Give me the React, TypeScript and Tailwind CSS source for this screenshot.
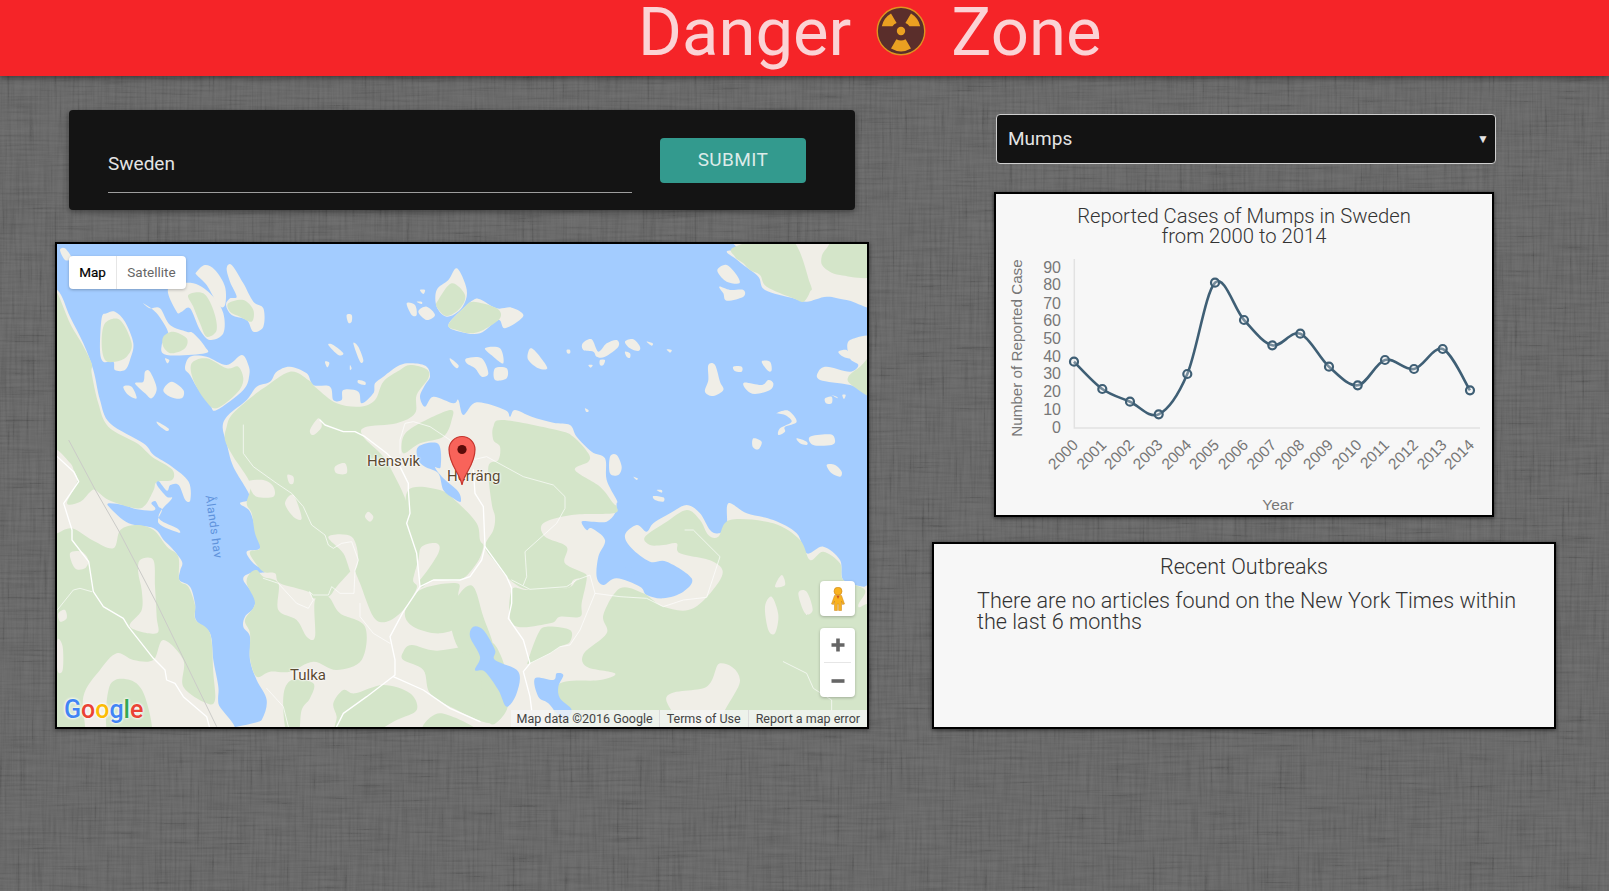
const COUNTRY = "Sweden";
const DISEASE = "Mumps";

// map shapes, in a 3x space: x = (pageX - 50) * 3, y = (pageY - 240) * 3
const land = [
  "-40,140 22,150 60,230 100,310 130,390 150,480 180,550 280,610 311,645 366,680 416,725 421,780 406,780 386,735 361,735 351,752 325,722 321,735 350,770 366,775 331,815 331,840 381,865 386,878 326,850 336,810 326,800 316,783 304,790 316,805 306,812 261,808 221,795 176,790 181,805 236,850 311,865 341,900 366,925 396,965 391,990 388,1020 420,1040 435,1090 438,1140 480,1180 490,1260 505,1340 505,1390 520,1500 -40,1500",
  "590,1500 635,1440 650,1380 620,1320 600,1260 600,1190 580,1160 585,1130 610,1105 615,1070 580,1020 600,1000 645,995 610,970 590,935 630,925 620,880 600,815 570,790 600,770 550,680 530,610 518,560 535,525 590,480 620,440 660,425 680,395 720,380 770,400 790,435 840,440 850,480 875,480 880,450 925,455 935,490 970,460 975,430 1000,410 1050,375 1090,370 1130,380 1140,410 1125,435 1110,470 1125,500 1150,470 1210,490 1225,480 1240,525 1280,487 1365,510 1380,530 1395,510 1445,530 1510,548 1560,555 1580,590 1625,635 1665,655 1670,720 1700,780 1700,790 1695,820 1670,845 1625,845 1595,845 1610,870 1625,865 1665,900 1645,950 1640,1010 1660,1035 1700,1015 1770,1040 1790,1065 1840,1075 1900,1055 1925,1015 1850,965 1800,965 1745,925 1725,885 1760,855 1790,875 1810,850 1860,820 1910,795 1950,820 1980,870 2005,880 2030,860 2035,790 2090,820 2170,840 2240,880 2270,940 2320,920 2370,960 2380,1020 2440,1040 2500,1040 2500,1500",
  "2030,35 2060,25 2070,-20 2500,-20 2500,195 2390,180 2330,170 2270,185 2230,175 2145,150 2125,110 2080,75 2055,55",
  "2305,395 2330,380 2400,395 2425,375 2400,355 2400,300 2500,300 2500,465 2400,435 2310,420",
  "30,30 45,25 65,55 45,60",
  "355,145 430,130 490,170 520,220 520,280 480,300 450,270 420,205 395,215 380,215",
  "440,95 465,75 495,90 525,140 525,195 505,195 470,135 440,105",
  "530,85 545,75 580,130 610,185 640,205 640,260 610,275 590,240 545,225 528,195 540,175 560,170 540,125",
  "155,235 170,220 195,215 225,245 250,310 240,360 225,390 195,390 190,365 160,365 150,330",
  "280,190 300,205 330,205 360,255 410,275 430,280 465,320 465,340 350,345 335,315 355,280 320,220",
  "405,385 420,350 470,350 530,375 575,345 595,375 598,405 580,450 500,510 480,495 440,440 420,405",
  "220,440 245,440 260,475 235,465",
  "255,430 280,425 285,395 300,395 320,445 305,475 285,460",
  "340,450 365,425 400,450 395,475 360,470",
  "322,545 355,565 350,573 325,555",
  "345,355 358,360 352,370",
  "1070,190 1095,195 1100,225 1085,225",
  "1105,215 1130,200 1155,225 1130,240",
  "1100,185 1115,185 1115,192",
  "1110,150 1125,150 1120,162",
  "1160,150 1195,120 1220,85 1245,130 1250,170 1230,210 1190,230 1160,200",
  "1195,255 1240,205 1270,180 1290,178 1340,205 1385,203 1420,228 1365,265 1345,240 1290,280 1230,275",
  "890,225 905,225 905,245 895,248",
  "835,315 850,315 880,340 865,345",
  "910,310 925,320 940,360 930,365",
  "825,365 838,368 832,382",
  "900,375 905,385 900,390",
  "925,420 945,425 945,435 925,430",
  "1200,355 1225,375 1220,385 1205,370",
  "1250,355 1295,355 1315,400 1295,410 1275,385 1250,370",
  "1305,325 1350,325 1360,370 1330,350",
  "1335,385 1370,385 1370,415 1335,420",
  "1435,335 1445,325 1470,350 1492,385 1465,385 1435,360",
  "1550,330 1560,330 1560,340 1552,340",
  "1598,310 1625,298 1645,335 1670,310 1700,300 1705,320 1665,350 1640,350 1630,335 1600,330",
  "1725,305 1750,298 1770,320 1765,333 1740,325",
  "1725,335 1740,340 1740,353 1730,350",
  "1790,305 1808,310 1805,317",
  "1850,328 1865,330 1860,338",
  "1615,375 1628,375 1622,383",
  "1650,360 1665,360 1660,375 1650,375",
  "1975,375 1995,375 2010,425 2020,450 1990,468 1965,455 1975,420",
  "2050,380 2075,380 2075,395 2055,393",
  "2135,365 2160,365 2165,390 2155,393",
  "2082,428 2135,435 2155,420 2170,430 2160,450 2115,462 2090,450",
  "2180,520 2215,512 2240,545 2205,560 2205,575 2185,585 2190,565 2225,545 2205,525",
  "2110,595 2135,605 2125,628 2108,620",
  "2240,595 2270,605 2270,615 2250,610",
  "2280,590 2340,583 2355,600 2345,615 2290,615",
  "2330,675 2355,675 2375,695 2370,710 2345,700",
  "1605,505 1615,510 1615,515 1608,515",
  "1750,710 1763,715 1760,720",
  "1810,768 1840,772 1840,785 1815,780",
  "1820,750 1835,750 1835,758",
  "1680,650 1700,645 1715,680 1705,705 1680,700",
  "2325,475 2345,470 2345,490 2328,490",
  "2345,465 2360,470 2363,475",
  "2377,465 2387,465 2382,477",
  "2365,335 2390,330 2405,355 2380,350",
  "2005,85 2030,75 2060,105 2068,130 2030,125 2005,100",
  "2008,140 2040,150 2080,150 2080,170 2030,182 2020,160",
];

const green = [
  "0,150 22,160 60,250 95,310 125,370 125,400 145,490 175,560 261,610 306,650 366,688 366,720 321,725 311,750 286,795 256,805 176,780 136,750 121,755 91,785 51,790 81,725 71,690 61,670 22,630 0,630",
  "0,890 22,880 66,865 126,900 190,925 211,870 261,855 311,870 351,920 385,950 388,1020 415,1040 435,1095 437,1140 480,1180 490,1300 495,1380 470,1390 400,1340 400,1260 340,1200 310,1260 250,1260 200,1240 150,1290 100,1370 100,1500 0,1500",
  "178,1340 240,1320 285,1370 300,1500 180,1500",
  "530,560 545,525 600,475 640,445 720,395 775,420 800,445 860,490 930,500 975,480 1000,425 1050,390 1080,375 1130,388 1135,415 1100,465 1095,520 1040,550 945,562 940,590 1000,650 1040,720 1070,790 1075,860 1105,960 1090,1020 1100,1045 1060,1110 1010,1145 970,1130 930,1030 910,985 905,990 860,1040 835,1070 790,1075 775,1055 690,1030 675,1000 640,995 610,960 600,935 630,925 615,880 605,820 590,790 600,730 550,650 525,600",
  "620,990 640,1010 685,1030 685,1110 740,1140 770,1190 795,1190 795,1080 835,1070 870,1120 945,1160 935,1260 860,1290 790,1265 720,1295 660,1295 620,1310 600,1255 600,1180 585,1140 615,1090 590,1030 600,1000",
  "1060,590 1100,555 1200,510 1205,540 1180,590 1110,610 1060,640",
  "1075,750 1170,750 1225,790 1280,850 1290,900 1300,920 1280,970 1230,1020 1150,1020 1110,1040 1105,960 1075,860",
  "1065,1115 1110,1050 1220,1030 1225,1070 1235,1150 1170,1180 1090,1160",
  "1060,1235 1085,1215 1160,1232 1290,1220 1340,1290 1370,1350 1370,1410 1320,1450 1210,1405 1140,1360 1120,1290 1060,1260",
  "850,1390 880,1350 915,1360 1000,1335 1080,1360 1100,1410 1040,1440 960,1480 860,1480 860,1430",
  "700,1370 725,1320 790,1330 780,1375 755,1410 745,1480 710,1480",
  "1120,1480 1170,1420 1290,1480",
  "1330,560 1360,540 1520,570 1570,590 1615,640 1615,665 1575,690 1650,740 1690,790 1700,800 1690,820 1565,825 1480,850 1485,890 1550,920 1545,970 1610,1005 1570,1020 1550,1045 1440,1050 1380,1020 1335,965 1305,920 1330,870 1335,830 1325,790 1315,680 1345,660 1350,620 1330,600",
  "1385,1050 1435,1050 1550,1045 1580,1020 1610,1010 1595,1090 1590,1130 1530,1130 1500,1150 1390,1155",
  "1435,1260 1465,1180 1490,1160 1560,1170 1560,1205 1530,1220 1500,1240 1440,1270",
  "1785,890 1850,845 1910,810 1950,840 1975,885 2005,890 2040,840 2170,850 2250,900 2280,960 2320,935 2370,970 2380,1020 2445,1050 2425,1100 2470,1125 2470,1490 2030,1490 2070,1320 2010,1270 1970,1340 1850,1370 1880,1490 1560,1490 1520,1340 1650,1320 1695,1300 1610,1280 1602,1240 1670,1180 1660,1125 1710,1045 1780,1060 1840,1100 1930,1105 2015,1010 1990,965 1890,940 1880,910 1840,915 1800,915",
  "1200,1130 1230,1060 1270,1040 1300,1130 1330,1220 1300,1240 1230,1230",
  "1295,1250 1330,1210 1370,1300 1370,1400 1320,1450 1290,1300",
  "2055,20 2215,-10 2280,130 2280,155 2260,185 2230,175 2150,140 2130,105 2100,90 2080,70 2055,50",
  "2365,-10 2480,-10 2480,105 2370,105 2320,80 2315,50 2330,25",
  "2395,410 2430,380 2480,340 2480,470 2405,435",
  "415,165 460,160 490,210 500,270 470,290 450,250 430,200",
  "535,190 580,180 610,210 605,245 570,230 540,215",
  "165,250 210,240 245,310 230,350 195,365 165,360 155,310",
  "340,290 370,275 410,295 405,325 365,340 340,320",
  "425,370 470,355 530,385 565,380 580,420 560,460 500,505 465,480 430,420",
  "1165,180 1205,130 1245,165 1230,205 1190,228 1160,200",
  "1195,255 1240,205 1270,185 1340,205 1350,235 1300,270 1260,280 1220,270",
];

const beige = [
  "705,790 730,765 755,835 730,830",
  "955,815 970,830 960,845 945,830",
  "780,570 805,535 815,560 790,585",
  "855,680 885,670 890,700 860,700",
  "712,705 730,710 730,730 718,730",
  "590,725 640,720 670,740 670,770 620,770 600,745",
  "835,890 905,890 925,960 905,1000 880,940",
  "1115,920 1160,910 1165,940 1110,1020 1090,1020 1105,960",
  "270,960 310,960 315,1040 320,1130 320,1180 240,1160 275,1110 275,1050 265,1000",
  "60,940 95,935 115,960 105,985 75,985",
  "25,1120 45,1110 50,1135 30,1145",
  "22,1200 38,1220 38,1290 22,1290",
  "2175,1040 2195,1005 2205,1035",
  "2145,1100 2165,1070 2185,1125 2175,1180 2155,1170",
  "2245,1060 2270,1055 2288,1110 2265,1120",
];

const water = [
  "1105,620 1165,612 1172,680 1155,682 1180,715 1225,755 1232,785 1210,775 1180,750 1165,700 1125,680 1105,660",
  "1260,1190 1270,1160 1300,1170 1335,1230 1335,1260 1405,1295 1400,1360 1370,1400 1345,1350 1305,1295 1275,1290 1290,1250",
  "1455,1315 1510,1320 1520,1300 1540,1305 1525,1340 1530,1375 1565,1410 1540,1440 1495,1390 1465,1370",
  "1725,985 1740,980 1755,1005 1740,1000",
];

// [points, stroke width]
const roads: [string, number][] = [
  ["22,650 71,695 86,725 41,790 66,870 66,900 116,965 130,1055 160,1100 220,1135 235,1160 310,1255 345,1290 350,1320 375,1330 400,1370 470,1430 478,1460", 4],
  ["22,1110 70,1050 90,1045 125,1055", 2],
  ["580,555 580,640 610,680 680,730 725,760 760,800 785,855 825,885 835,915 850,925 875,910 905,905 925,960 915,990 912,1060 870,1060 845,1040 835,1065 790,1065 778,1055 790,1080 775,1105 740,1090 685,1030 640,1015", 2],
  ["810,540 825,555 880,575 915,575 945,590 1010,640 1050,680 1075,730 1075,750 1080,820 1070,850 1100,940 1110,1040 1060,1115 1020,1190 1035,1260 1035,1305 950,1370 880,1420 860,1460", 4],
  ["1050,640 1050,600 1065,550 1090,545 1140,560 1200,600 1220,640 1265,660 1310,650 1420,710 1510,735 1545,770 1545,805 1520,850 1425,935 1430,1010 1420,1035", 2],
  ["1270,690 1275,760 1300,800 1305,920 1295,960 1260,1010 1230,1020 1150,1020 1110,1040", 4],
  ["1305,920 1370,1010 1385,1045 1385,1090 1375,1135 1420,1200 1440,1270 1420,1295 1440,1370 1445,1410", 4],
  ["1385,1020 1440,1048 1550,1040 1580,1020 1620,1005 1635,1060 1710,1070 1790,1075 1840,1100 1900,1080 1970,1072 2010,950 1930,870 1905,870", 2],
  ["1635,1060 1590,1170 1560,1215 1530,1220 1500,1240 1440,1270", 2],
  ["1030,1310 1120,1350 1200,1405 1290,1445", 4],
  ["2200,1265 2270,1300 2290,1345 2345,1380 2345,1410", 2],
  ["650,1345 700,1400 715,1460", 2],
  ["930,1090 930,1130 970,1180 1020,1210", 2],
];

const years = Array.from({ length: 15 }, (_, i) => 2000 + i);
const yTicks = [
  ["90", 267], ["80", 284], ["70", 303], ["60", 320], ["50", 338],
  ["40", 356], ["30", 373], ["20", 391], ["10", 409], ["0", 427],
] as const;
// chart points in page pixels, minus the card origin (996, 194)
const series = [
  [1074, 361.7], [1102.3, 389], [1130, 401.7], [1158.7, 414.3], [1187.3, 374],
  [1215, 282.7], [1244, 320], [1272.3, 345.3], [1300.3, 333.7], [1329, 366.7],
  [1357.7, 385.3], [1385, 360], [1414, 369], [1442.7, 349], [1470, 390.3],
].map(([x, y]) => [x - 996, y - 194] as [number, number]);

const curve = (pts: [number, number][]) => {
  let d = `M${pts[0][0]},${pts[0][1]}`;
  for (let i = 0; i < pts.length - 1; i++) {
    const p0 = pts[Math.max(i - 1, 0)];
    const p1 = pts[i];
    const p2 = pts[i + 1];
    const p3 = pts[Math.min(i + 2, pts.length - 1)];
    const c1x = p1[0] + (p2[0] - p0[0]) / 6;
    const c1y = p1[1] + (p2[1] - p0[1]) / 6;
    const c2x = p2[0] - (p3[0] - p1[0]) / 6;
    const c2y = p2[1] - (p3[1] - p1[1]) / 6;
    d += ` C${c1x},${c1y} ${c2x},${c2y} ${p2[0]},${p2[1]}`;
  }
  return d;
};

// closed catmull-rom so the coast lines don't look like polygons
const blob = (points: string) => {
  const pts = points.split(" ").map((p) => p.split(",").map(Number));
  const n = pts.length;
  let d = `M${pts[0][0]},${pts[0][1]}`;
  for (let i = 0; i < n; i++) {
    const p0 = pts[(i - 1 + n) % n];
    const p1 = pts[i];
    const p2 = pts[(i + 1) % n];
    const p3 = pts[(i + 2) % n];
    d += ` C${p1[0] + (p2[0] - p0[0]) / 6},${p1[1] + (p2[1] - p0[1]) / 6} ${p2[0] - (p3[0] - p1[0]) / 6},${p2[1] - (p3[1] - p1[1]) / 6} ${p2[0]},${p2[1]}`;
  }
  return d + "Z";
};

const LinenTexture = () => (
  <svg className="absolute inset-0 w-full h-full" aria-hidden="true">
    <filter id="warp" x="0" y="0" width="100%" height="100%">
      <feTurbulence type="fractalNoise" baseFrequency="0.02 0.4" numOctaves="2" seed="4" />
      <feColorMatrix values="1.6 0 0 0 -0.3 1.6 0 0 0 -0.3 1.6 0 0 0 -0.3 0 0 0 0 0.07" />
      <feGaussianBlur stdDeviation="0.7" />
    </filter>
    <filter id="weft" x="0" y="0" width="100%" height="100%">
      <feTurbulence type="fractalNoise" baseFrequency="0.4 0.02" numOctaves="2" seed="9" />
      <feColorMatrix values="1.6 0 0 0 -0.3 1.6 0 0 0 -0.3 1.6 0 0 0 -0.3 0 0 0 0 0.06" />
      <feGaussianBlur stdDeviation="0.7" />
    </filter>
    <rect width="100%" height="100%" filter="url(#warp)" />
    <rect width="100%" height="100%" filter="url(#weft)" />
  </svg>
);

const Hazard = () => (
  <svg viewBox="0 0 50 50" className="w-[50px] h-[50px] shrink-0">
    <circle cx="25" cy="25" r="23.8" fill="#5a2e2b" stroke="#e0931f" strokeWidth="1.4" />
    <circle cx="25" cy="25" r="4.2" fill="#eaa021" />
    <path d="M16.5 20.2 L5.8 20.2 A20 20 0 0 1 15 7.6 L20.6 16.9 A9.5 9.5 0 0 0 16.5 20.2Z" fill="#eaa021" />
    <path d="M33.5 20.2 L44.2 20.2 A20 20 0 0 0 35 7.6 L29.4 16.9 A9.5 9.5 0 0 1 33.5 20.2Z" fill="#eaa021" />
    <path d="M20.4 33.2 L15 42.6 A20 20 0 0 0 35 42.6 L29.6 33.2 A9.5 9.5 0 0 1 20.4 33.2Z" fill="#eaa021" />
  </svg>
);

const MapLabel = ({ className, children }: { className: string; children: string }) => (
  <span className={`absolute text-[15px] leading-none text-[#5b4a32] [text-shadow:0_0_2px_#fff,0_0_2px_#fff,0_0_3px_#fff] ${className}`}>
    {children}
  </span>
);

const MapPanel = () => (
  <div className="relative mt-[32px] h-[487px] border-2 border-black overflow-hidden bg-[#a3ccff] shadow-[0_1px_4px_rgba(0,0,0,0.5)]">
    <svg viewBox="21 12 2430 1449" className="absolute inset-0 w-[810px] h-[483px]">
      <g fill="#f0eee7">
        {land.map((p, i) => <path key={i} d={blob(p)} />)}
      </g>
      <g fill="#d4e5c9">
        {green.map((p, i) => <path key={i} d={blob(p)} />)}
      </g>
      <g fill="#f0eee7">
        {beige.map((p, i) => <path key={i} d={blob(p)} />)}
      </g>
      <g fill="#a3ccff">
        {water.map((p, i) => <path key={i} d={blob(p)} />)}
      </g>
      <polyline points="56,600 136,750 205,870 320,1090 500,1460" fill="none" stroke="#cbcbc8" strokeWidth="3" />
      <g fill="none" stroke="#ffffff" strokeLinejoin="round" strokeLinecap="round">
        {roads.map(([p, w], i) => <polyline key={i} points={p} strokeWidth={w} />)}
      </g>
    </svg>

    <span className="absolute left-[125px] top-[277px] w-[64px] whitespace-nowrap text-[12px] leading-none tracking-[0.5px] text-[#5f93dc] rotate-[82deg]">
      Ålands hav
    </span>
    <MapLabel className="left-[310px] top-[210px]">Hensvik</MapLabel>
    <MapLabel className="left-[390px] top-[225px]">Herräng</MapLabel>
    <MapLabel className="left-[233px] top-[424px]">Tulka</MapLabel>

    <svg viewBox="0 0 28 51" className="absolute left-[391px] top-[191px] w-[28px] h-[51px]">
      <path d="M14 50 C12 38 1 30 1 14.5 A13 13 0 0 1 27 14.5 C27 30 16 38 14 50Z" fill="#f8635a" stroke="#c5352d" strokeWidth="1.2" />
      <circle cx="14" cy="14.5" r="4.6" fill="#5a0c09" />
    </svg>

    <div className="absolute left-[12px] top-[12px] h-[33px] w-[117px] flex bg-white rounded-sm shadow-[0_1px_3px_rgba(0,0,0,0.25)] text-[13.5px]">
      <span className="w-[48px] flex items-center justify-center text-black [-webkit-text-stroke:0.2px_#000] border-r border-[#e6e6e6]">Map</span>
      <span className="flex-1 flex items-center justify-center text-[#666]">Satellite</span>
    </div>

    <div className="absolute left-[7px] top-[453px] flex text-[25px] leading-none font-medium [text-shadow:0_0_3px_#fff,0_0_3px_#fff]">
      <span className="text-[#4285f4]">G</span>
      <span className="text-[#ea4335]">o</span>
      <span className="text-[#fbbc05]">o</span>
      <span className="text-[#4285f4]">g</span>
      <span className="text-[#34a853]">l</span>
      <span className="text-[#ea4335]">e</span>
    </div>

    <div className="absolute right-0 bottom-0 h-[17px] pt-[2px] flex items-center bg-[#f5f5f5]/75 text-[12.5px] text-[#444]">
      <span className="px-[6px] border-r border-[#dcdcdc]">Map data ©2016 Google</span>
      <span className="px-[7px] border-r border-[#dcdcdc]">Terms of Use</span>
      <span className="px-[7px]">Report a map error</span>
    </div>

    <div className="absolute left-[763px] top-[337px] w-[35px] h-[35px] flex items-center justify-center bg-white rounded-sm shadow-[0_1px_3px_rgba(0,0,0,0.25)]">
      <svg viewBox="0 0 14 24" className="w-[14px] h-[24px]">
        <circle cx="7" cy="4.2" r="4" fill="#f9b21f" stroke="#c9831a" strokeWidth="0.6" />
        <path d="M3.5 8.5 H10.5 L13.5 17 L11.5 17.5 L10.5 14 V23.5 H7.6 V17 H6.4 V23.5 H3.5 V14 L2.5 17.5 L0.5 17Z" fill="#f9b21f" stroke="#c9831a" strokeWidth="0.5" />
        <path d="M5.5 8.8 L7 12 L8.5 8.8Z" fill="#d0541f" />
      </svg>
    </div>

    <div className="absolute left-[763px] top-[384px] w-[35px] h-[69px] flex flex-col items-center bg-white rounded-sm shadow-[0_1px_3px_rgba(0,0,0,0.25)]">
      <svg viewBox="0 0 14 14" className="w-[14px] h-[14px] mt-[10px]">
        <path d="M7 0.5 V13.5 M0.5 7 H13.5" stroke="#666" strokeWidth="3.6" fill="none" />
      </svg>
      <div className="w-[27px] h-px bg-[#e6e6e6] mt-[10px]" />
      <svg viewBox="0 0 14 4" className="w-[14px] h-[4px] mt-[16px]">
        <path d="M0.5 2 H13.5" stroke="#666" strokeWidth="3.6" fill="none" />
      </svg>
    </div>
  </div>
);

const Chart = () => (
  <div className="relative mt-[28px] ml-[62px] w-[500px] h-[325px] border-2 border-black bg-[#f7f7f7] shadow-[0_1px_4px_rgba(0,0,0,0.6)]">
    <h2 className="mt-[12px] text-center text-[20.25px] leading-[20px] font-light text-[#333]">
      Reported Cases of {DISEASE} in {COUNTRY}
      <br />
      from 2000 to 2014
    </h2>
    <svg viewBox="0 0 496 321" className="absolute inset-0 w-[496px] h-[321px] font-['Liberation_Sans',sans-serif] text-[15.5px]">
      <path d="M78.3 65 V234 H484" fill="none" stroke="#e2e2e2" strokeWidth="1.5" />
      {yTicks.map(([label, y]) => (
        <text key={label} x="65" y={y - 194 + 6} textAnchor="end" fill="#777" className="text-[16px]">{label}</text>
      ))}
      {years.map((year, i) => (
        <text
          key={year}
          transform={`translate(${series[i][0] + 5},${252}) rotate(-45)`}
          textAnchor="end"
          fill="#777"
        >
          {year}
        </text>
      ))}
      <text transform="translate(26,154) rotate(-90)" textAnchor="middle" fill="#777" className="text-[15.2px]">
        Number of Reported Case
      </text>
      <text x="282" y="316" textAnchor="middle" fill="#777" className="text-[15.5px]">Year</text>
      <path d={curve(series)} fill="none" stroke="#3f5f75" strokeWidth="2.6" />
      {series.map(([x, y]) => (
        <circle key={x} cx={x} cy={y} r="4" fill="#f7f7f7" fillOpacity="0.3" stroke="#3f5f75" strokeWidth="2.2" />
      ))}
    </svg>
  </div>
);

export default function App() {
  return (
    <div className="relative w-full h-[891px] overflow-hidden bg-[#5e5e5e] font-['Roboto',sans-serif]">
      <LinenTexture />
      <header className="relative h-[76px] flex items-center pl-[638px] pb-[12px] bg-[#f52428] text-[#fbd3d5] text-[67px] leading-none shadow-[0_2px_6px_rgba(0,0,0,0.45)]">
        <span>Danger</span>
        <span className="ml-[25px] mr-[25px] mb-[3px]"><Hazard /></span>
        <span>Zone</span>
      </header>

      <main className="relative flex pl-[55px]">
        <section className="w-[814px]">
          <form className="mt-[34px] mx-[14px] h-[100px] flex bg-[#141414] rounded-sm pl-[39px] shadow-[0_2px_6px_rgba(0,0,0,0.4)]">
            <input
              defaultValue={COUNTRY}
              className="mt-[28px] w-[524px] h-[55px] pb-[4px] bg-transparent border-b border-[#9e9e9e] text-[19px] text-[#e4e4e4] outline-none"
            />
            <button
              type="button"
              className="mt-[28px] ml-[28px] w-[146px] h-[45px] bg-[#339a8e] rounded-sm text-[19px] tracking-[0.4px] text-[#dcebe9]"
            >
              SUBMIT
            </button>
          </form>
          <MapPanel />
        </section>

        <aside className="ml-[63px] w-[624px]">
          <div className="mt-[38px] ml-[64px] w-[500px] h-[50px] flex items-center justify-between pl-[11px] pr-[6px] bg-[#131313] border border-[#cfcfcf] rounded-sm text-[19px] text-[#e4e4e4]">
            {DISEASE}
            <span className="text-[12px]">▼</span>
          </div>
          <Chart />
          <div className="mt-[25px] h-[187px] border-2 border-black bg-[#f7f7f7] shadow-[0_1px_4px_rgba(0,0,0,0.6)] font-light text-[#333]">
            <h2 className="mt-[11px] text-center text-[21.6px] leading-[24px]">Recent Outbreaks</h2>
            <p className="mt-[11px] ml-[43px] mr-[36px] text-[21.6px] leading-[21px]">
              There are no articles found on the New York Times within the last 6 months
            </p>
          </div>
        </aside>
      </main>
    </div>
  );
}
